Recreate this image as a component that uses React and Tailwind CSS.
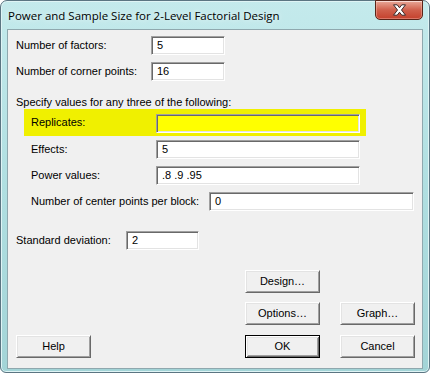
import React from "react";

const inputCls =
  "h-[19px] bg-white border border-t-[#a0a0a0] border-l-[#a0a0a0] border-r-[#ffffff] border-b-[#ffffff] shadow-[inset_1px_1px_0_#696969,inset_-1px_-1px_0_#e3e3e3] flex items-center pl-[5px] text-[11px] text-black";

function Input({ value, w, yellow }) {
  return (
    <div className={inputCls + (yellow ? " !bg-[#ffff00]" : "")} style={{ width: w }}>
      {value}
    </div>
  );
}

function Btn({ children, def }) {
  return (
    <div
      className={
        "w-[75px] h-[23px] flex items-center justify-center text-[11px] text-black bg-[#f0f0f0] " +
        (def
          ? "border border-[#000] shadow-[inset_1px_1px_0_#ffffff,inset_-1px_-1px_0_#696969,inset_2px_2px_0_#e3e3e3,inset_-2px_-2px_0_#a0a0a0]"
          : "border border-t-[#ffffff] border-l-[#ffffff] border-r-[#696969] border-b-[#696969] shadow-[inset_1px_1px_0_#e3e3e3,inset_-1px_-1px_0_#a0a0a0]")
      }
    >
      {children}
    </div>
  );
}

export default function App() {
  return (
    <div
      className="w-[430px] h-[373px] bg-white"
      style={{ fontFamily: '"Liberation Sans", Arial, sans-serif' }}
    >
      <div className="relative w-[430px] h-[373px] rounded-t-[7px] rounded-b-[6px] border border-[#5b7582] bg-gradient-to-b from-[#c4eaec] via-[#b0dfe1] to-[#a3d4d7] shadow-[inset_0_0_0_1px_#dff4f5] flex flex-col">
        {/* Title bar */}
        <div className="h-[28px] flex items-center pl-[7px] relative">
          <span
            className="text-[11.5px] text-black mt-[2px]"
            style={{ fontFamily: '"Open Sans", "Noto Sans", sans-serif', textShadow: "0 0 6px rgba(255,255,255,0.9)" }}
          >
            Power and Sample Size for 2-Level Factorial Design
          </span>
          <div className="absolute right-[6px] top-[-1px] w-[48px] h-[20px] rounded-b-[5px] border border-[#5a2418] bg-gradient-to-b from-[#e8a898] via-[#d0604c] to-[#c4402c] shadow-[inset_0_1px_0_rgba(255,255,255,0.5),inset_0_0_0_1px_rgba(255,200,190,0.4)] flex items-center justify-center">
            <svg width="15" height="12" viewBox="0 0 15 12">
              <path
                d="M1.5 0.8 H5.2 L7.5 3.8 L9.8 0.8 H13.5 L9.5 6 L13.5 11.2 H9.8 L7.5 8.2 L5.2 11.2 H1.5 L5.5 6 Z"
                fill="#ffffff"
                stroke="#3a2a2a"
                strokeWidth="1"
                strokeLinejoin="round"
              />
            </svg>
          </div>
        </div>
        {/* Client area */}
        <div className="mx-[6px] w-[416px] h-[340px] border border-[#8fa8ae] bg-[#f0f0f0] flex flex-col text-[11px] text-black">
          <div className="mt-[6px] ml-[8px] h-[19px] flex items-center">
            <span className="w-[135px]">Number of factors:</span>
            <Input value="5" w={74} />
          </div>
          <div className="mt-[7px] ml-[8px] h-[19px] flex items-center">
            <span className="w-[135px]">Number of corner points:</span>
            <Input value="16" w={74} />
          </div>
          <div className="mt-[14px] ml-[8px] h-[14px] flex items-center">
            Specify values for any three of the following:
          </div>
          <div className="ml-[16px] w-[342px] h-[27px] bg-[#f0f000] flex items-start pt-[5px]">
            <span className="ml-[7px] w-[125px]">Replicates:</span>
            <Input value="" w={204} yellow />
          </div>
          <div className="mt-[4px] ml-[23px] h-[19px] flex items-center">
            <span className="w-[125px]">Effects:</span>
            <Input value="5" w={204} />
          </div>
          <div className="mt-[7px] ml-[23px] h-[19px] flex items-center">
            <span className="w-[125px]">Power values:</span>
            <Input value=".8 .9 .95" w={204} />
          </div>
          <div className="mt-[7px] ml-[23px] h-[19px] flex items-center">
            <span className="w-[178px]">Number of center points per block:</span>
            <Input value="0" w={205} />
          </div>
          <div className="mt-[20px] ml-[8px] h-[19px] flex items-center">
            <span className="w-[110px]">Standard deviation:</span>
            <Input value="2" w={73} />
          </div>
          <div className="mt-[20px] ml-[237px] flex">
            <Btn>Design…</Btn>
          </div>
          <div className="mt-[9px] ml-[237px] flex gap-[20px]">
            <Btn>Options…</Btn>
            <Btn>Graph…</Btn>
          </div>
          <div className="mt-[10px] ml-[8px] flex">
            <Btn>Help</Btn>
            <div className="ml-[154px] flex gap-[20px]">
              <Btn def>OK</Btn>
              <Btn>Cancel</Btn>
            </div>
          </div>
        </div>
      </div>
    </div>
  );
}
